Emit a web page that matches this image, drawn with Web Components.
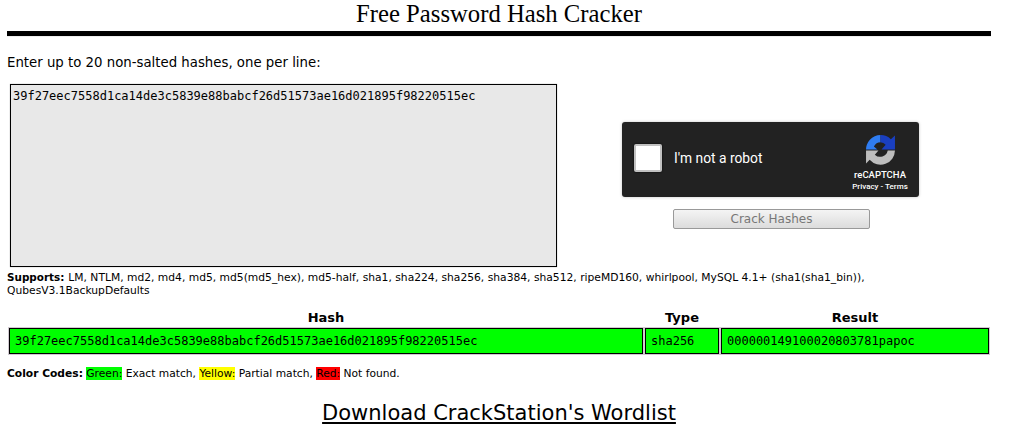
<!DOCTYPE html>
<html>
<head>
<meta charset="utf-8">
<title>Free Password Hash Cracker</title>
<style>
    body {
        margin: 0;
        background: #fff;
        color: #000;
        font-family: "DejaVu Sans", sans-serif;
    }
</style>
</head>
<body>
<cs-page>
    <cs-title>Free Password Hash Cracker</cs-title>
    <cs-prompt>Enter up to 20 non-salted hashes, one per line:</cs-prompt>
    <cs-form hashes="39f27eec7558d1ca14de3c5839e88babcf26d51573ae16d021895f98220515ec"></cs-form>
    <cs-supports>LM, NTLM, md2, md4, md5, md5(md5_hex), md5-half, sha1, sha224, sha256, sha384, sha512, ripeMD160, whirlpool, MySQL 4.1+ (sha1(sha1_bin)),<span slot="more">QubesV3.1BackupDefaults</span></cs-supports>
    <cs-results hash="39f27eec7558d1ca14de3c5839e88babcf26d51573ae16d021895f98220515ec" type="sha256" result="000000149100020803781papoc"></cs-results>
    <cs-legend></cs-legend>
    <cs-wordlist>Download CrackStation's Wordlist</cs-wordlist>
</cs-page>

<script>
class Page extends HTMLElement {
    constructor() {
        super();
        this.attachShadow({ mode: "open" });
        this.shadowRoot.innerHTML = `
        <style>
            :host {
                display: flex;
                flex-direction: column;
                width: 984px;
                margin-left: 7px;
            }
        </style>
        <slot></slot>
        `;
    }
}

class Title extends HTMLElement {
    constructor() {
        super();
        this.attachShadow({ mode: "open" });
        this.shadowRoot.innerHTML = `
        <style>
            :host {
                display: block;
                height: 31px;
                border-bottom: 5px solid #000;
                box-shadow: 0 1px 0 #eee;
                text-align: center;
                font: 24.7px/27px "Liberation Serif", serif;
            }
        </style>
        <slot></slot>
        `;
    }
}

class Prompt extends HTMLElement {
    constructor() {
        super();
        this.attachShadow({ mode: "open" });
        this.shadowRoot.innerHTML = `
        <style>
            :host {
                display: block;
                margin-top: 19px;
                height: 29px;
                font-size: 13.3px;
                line-height: 16px;
            }
        </style>
        <slot></slot>
        `;
    }
}

class Captcha extends HTMLElement {
    constructor() {
        super();
        this.attachShadow({ mode: "open" });
        this.shadowRoot.innerHTML = `
        <style>
            :host {
                display: flex;
                align-items: center;
                box-sizing: border-box;
                width: 297px;
                height: 75px;
                padding: 0 12px;
                background: #222;
                border-radius: 3px;
                box-shadow: 0 0 3px rgba(0, 0, 0, .25);
                color: #fff;
                font-family: Roboto, sans-serif;
            }
            .box {
                box-sizing: border-box;
                width: 28px;
                height: 28px;
                margin-bottom: 4px;
                background: #fff;
                border: 2px solid #c1c1c1;
                border-radius: 2px;
                box-shadow: 0 0 2px #000;
            }
            .label {
                flex: 1;
                margin: 0 0 4px 12px;
                font-size: 13.8px;
            }
            .brand {
                display: flex;
                flex-direction: column;
                align-items: center;
                flex: none;
                width: 54px;
                margin-top: 7px;
                white-space: nowrap;
            }
            svg { display: block; }
            .name { margin-top: 4px; font-size: 9.5px; font-weight: 500; line-height: 12px; }
            .links { font-size: 8px; font-weight: 500; line-height: 12px; }
        </style>
        <div class="box"></div>
        <div class="label">I'm not a robot</div>
        <div class="brand">
            <svg width="31" height="31" viewBox="0 1 30 30">
                <path d="M1 17 A14 14 0 0 1 15 2 V9 A7.5 7.5 0 0 0 8.6 13 L12 16 H1Z" fill="#2f7df2"/>
                <path d="M15 2 A14 14 0 0 1 25 6 L29 2.5 V16 H16 L20 11.5 A7.5 7.5 0 0 0 15 9Z" fill="#1a3fc0"/>
                <path d="M29 17 A14 14 0 0 1 4.5 26 L1 29.5 V17 H13 L9.5 21 A7.5 7.5 0 0 0 22 17Z" fill="#bdbdbd"/>
            </svg>
            <div class="name">reCAPTCHA</div>
            <div class="links">Privacy - Terms</div>
        </div>
        `;
    }
}

class Form extends HTMLElement {
    constructor() {
        super();
        this.attachShadow({ mode: "open" });
        this.shadowRoot.innerHTML = `
        <style>
            :host {
                display: flex;
                height: 183px;
                padding-left: 3px;
            }
            .hashes {
                box-sizing: border-box;
                width: 547px;
                height: 183px;
                padding: 4px 2px;
                background: #e8e8e8;
                border: 1px solid #000;
                box-shadow: 0 0 1px rgba(0, 0, 0, .4);
                font: 12px/14px "DejaVu Sans Mono", monospace;
            }
            .side {
                display: flex;
                flex-direction: column;
                align-items: center;
                gap: 12px;
                margin: 38px 0 0 65px;
            }
            .crack {
                box-sizing: border-box;
                width: 197px;
                height: 20px;
                margin-left: 2px;
                background: linear-gradient(#f4f4f4, #dcdcdc);
                border: 1px solid #999;
                border-radius: 2px;
                color: #777;
                font: 12px/18px "DejaVu Sans", sans-serif;
                text-align: center;
            }
        </style>
        <div class="hashes">${this.getAttribute("hashes")}</div>
        <div class="side">
            <cs-captcha></cs-captcha>
            <div class="crack">Crack Hashes</div>
        </div>
        `;
    }
}

class Supports extends HTMLElement {
    constructor() {
        super();
        this.attachShadow({ mode: "open" });
        this.shadowRoot.innerHTML = `
        <style>
            :host {
                display: block;
                margin-top: 4px;
                font-size: 10.73px;
                line-height: 13px;
            }
            .first { display: flex; gap: 4px; }
            b { font-size: 10.4px; font-weight: bold; }
            .more { display: block; }
        </style>
        <div class="first"><b>Supports:</b><span><slot></slot></span></div>
        <slot class="more" name="more"></slot>
        `;
    }
}

class Results extends HTMLElement {
    constructor() {
        super();
        this.attachShadow({ mode: "open" });
        this.shadowRoot.innerHTML = `
        <style>
            :host {
                display: grid;
                grid-template-columns: 634px 74px 268px;
                column-gap: 2px;
                margin: 13px 0 0 2px;
            }
            .head {
                height: 18px;
                font-size: 13px;
                font-weight: bold;
                line-height: 16px;
                text-align: center;
            }
            .cell {
                box-sizing: border-box;
                height: 26px;
                padding-left: 5px;
                background: #0f0;
                border: 1px solid #000;
                box-shadow: 0 0 0 1px rgba(120, 100, 120, .35);
                font: 12px/24px "DejaVu Sans Mono", monospace;
            }
        </style>
        <div class="head">Hash</div>
        <div class="head">Type</div>
        <div class="head">Result</div>
        <div class="cell">${this.getAttribute("hash")}</div>
        <div class="cell">${this.getAttribute("type")}</div>
        <div class="cell">${this.getAttribute("result")}</div>
        `;
    }
}

class Legend extends HTMLElement {
    constructor() {
        super();
        this.attachShadow({ mode: "open" });
        this.shadowRoot.innerHTML = `
        <style>
            :host {
                display: block;
                margin-top: 13px;
                font-size: 10.7px;
                line-height: 13px;
            }
            .green { background: #0f0; }
            .yellow { background: #ff0; }
            .red { background: #f00; }
        </style>
        <b>Color Codes:</b> <span class="green">Green:</span> Exact match, <span class="yellow">Yellow:</span> Partial match, <span class="red">Red:</span> Not found.
        `;
    }
}

class Wordlist extends HTMLElement {
    constructor() {
        super();
        this.attachShadow({ mode: "open" });
        this.shadowRoot.innerHTML = `
        <style>
            :host {
                display: block;
                margin-top: 20px;
                font-size: 21px;
                line-height: 26px;
                text-align: center;
                text-decoration: underline;
            }
        </style>
        <slot></slot>
        `;
    }
}

customElements.define("cs-page", Page);
customElements.define("cs-title", Title);
customElements.define("cs-prompt", Prompt);
customElements.define("cs-captcha", Captcha);
customElements.define("cs-form", Form);
customElements.define("cs-supports", Supports);
customElements.define("cs-results", Results);
customElements.define("cs-legend", Legend);
customElements.define("cs-wordlist", Wordlist);
</script>
</body>
</html>
